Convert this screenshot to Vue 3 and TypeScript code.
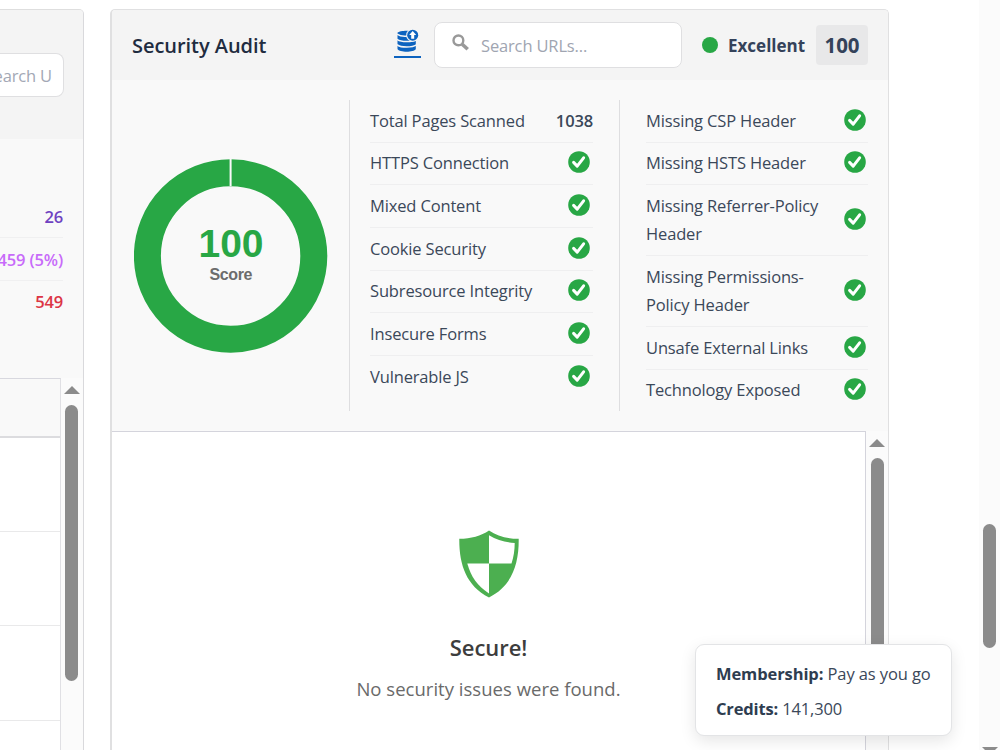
<script setup lang="ts">
interface Check {
  label: string
  value?: string
}

const connectionChecks: Check[] = [
  { label: 'Total Pages Scanned', value: '1038' },
  { label: 'HTTPS Connection' },
  { label: 'Mixed Content' },
  { label: 'Cookie Security' },
  { label: 'Subresource Integrity' },
  { label: 'Insecure Forms' },
  { label: 'Vulnerable JS' },
]

const headerChecks: Check[] = [
  { label: 'Missing CSP Header' },
  { label: 'Missing HSTS Header' },
  { label: 'Missing Referrer-Policy Header' },
  { label: 'Missing Permissions-Policy Header' },
  { label: 'Unsafe External Links' },
  { label: 'Technology Exposed' },
]

const checkColumns: Check[][] = [connectionChecks, headerChecks]
</script>

<template>
  <div class="page">
    <section class="side-panel">
      <div class="side-head">
        <div class="side-search"><span>Search U</span></div>
      </div>
      <div class="side-stats">
        <div class="stat indigo">26</div>
        <div class="stat violet">459 (5%)</div>
        <div class="stat red">549</div>
      </div>
      <div class="side-results">
        <div class="side-table">
          <div class="table-head"></div>
          <div v-for="n in 4" :key="n" class="table-row"></div>
        </div>
        <div class="scroll-track">
          <svg class="arrow" width="16" height="8" viewBox="0 0 16 8"><path d="M0 8 8 0l8 8z" /></svg>
          <div class="thumb side-thumb"></div>
        </div>
      </div>
    </section>

    <section class="audit">
      <header class="audit-head">
        <h2>Security Audit</h2>
        <a class="export">
          <svg width="22" height="24" viewBox="0 0 22 24">
            <path class="ink" d="M.5 3.7C2.6 1.5 14 .7 18.8 3.6V20c-2 3.6-16.3 3.6-18.3 0z" />
            <path class="gap" d="M0 5.2c3 2.1 7 2.3 11 1.8M0 10.3c4 3 15 3 20 0M0 15.7c4 3.2 15 3.2 20 0" />
            <circle class="cut" cx="15.7" cy="6.2" r="6.5" />
            <circle class="ink" cx="15.7" cy="6.2" r="5.5" />
            <path class="up" d="m15.7 2.1 3.5 3.9h-2v3.8h-3V6h-2z" />
          </svg>
        </a>
        <div class="search">
          <svg width="18" height="18" viewBox="0 0 18 18">
            <circle cx="6.4" cy="6.4" r="4.9" />
            <path d="m10.2 10.2 5.5 5.1" />
          </svg>
          <span>Search URLs...</span>
        </div>
        <div class="rating">
          <i class="dot"></i>
          <span class="grade">Excellent</span>
          <strong class="badge">100</strong>
        </div>
      </header>

      <div class="summary">
        <div class="score">
          <svg width="194" height="194" viewBox="0 0 194 194">
            <circle class="ring" cx="96.6" cy="97" r="83.2" />
            <path class="notch" d="M96.6 0v27" />
            <text class="score-value" x="97" y="97.5" textLength="65">100</text>
            <text class="score-label" x="97" y="121" textLength="43">Score</text>
          </svg>
        </div>
        <div v-for="(column, c) in checkColumns" :key="c" class="checks">
          <div v-for="item in column" :key="item.label" class="check">
            <span>{{ item.label }}</span>
            <strong v-if="item.value">{{ item.value }}</strong>
            <svg v-else width="22" height="22" viewBox="0 0 22 22">
              <circle cx="11" cy="11" r="10.8" />
              <path d="m5.6 11.4 3.6 3.7 6.4-8.3" />
            </svg>
          </div>
        </div>
      </div>

      <div class="results">
        <div class="empty">
          <svg class="shield" width="60" height="68" viewBox="0 0 60 68">
            <path class="shield-body" d="M30 .5C22 6 12 8.8.3 8.8 0 34 7 56 30 67.5 53 56 60 34 59.7 8.8 48 8.8 38 6 30 .5z" />
            <path class="shield-clear" d="M30 5.3C38 10.2 46 12.2 55.7 13c0 7.3-1 14-3.2 20.6H30z" />
            <path class="shield-clear" d="M30 33.6v29.8C18.5 56.5 12 47 8.3 33.6z" />
          </svg>
          <h3>Secure!</h3>
          <p>No security issues were found.</p>
        </div>
        <div class="scroll-track">
          <svg class="arrow" width="16" height="8" viewBox="0 0 16 8"><path d="M0 8 8 0l8 8z" /></svg>
          <div class="thumb"></div>
        </div>
      </div>
    </section>

    <div class="page-scroll">
      <div class="page-thumb"></div>
      <svg class="arrow" width="16" height="8" viewBox="0 0 16 8"><path d="M0 0h16L8 8z" /></svg>
    </div>

    <aside class="account">
      <div class="membership"><b>Membership:</b> Pay as you go</div>
      <div class="credits"><b>Credits:</b> 141,300</div>
    </aside>
  </div>
</template>

<style>
body {
  margin: 0;
  overflow: hidden;
  background: #fff;
}
</style>

<style scoped>
* {
  box-sizing: border-box;
}
.page {
  position: relative;
  display: flex;
  width: 1000px;
  height: 750px;
  overflow: hidden;
  background: #fff;
  color: #3b4859;
  font-family: 'Open Sans', 'Noto Sans', sans-serif;
  font-size: 16.5px;
  letter-spacing: -0.15px;
}
svg {
  display: block;
  flex: none;
}
.side-panel {
  display: flex;
  flex-direction: column;
  width: 84px;
  height: 741px;
  margin-top: 9px;
  border-top: 1px solid #dedede;
  border-right: 1px solid #d9d9dc;
  border-radius: 0 5px 0 0;
  overflow: hidden;
  background: #f9f9f9;
}
.side-head {
  display: flex;
  height: 129px;
  padding-top: 43px;
  background: #f4f4f4;
}
.side-search {
  display: flex;
  align-items: center;
  justify-content: flex-end;
  width: 64px;
  height: 44px;
  padding-right: 11px;
  border: 1px solid #dfdfe1;
  border-left: 0;
  border-radius: 0 8px 8px 0;
  overflow: hidden;
  background: #fff;
  color: #a3a8b5;
  white-space: nowrap;
}
.side-stats {
  height: 239px;
  padding: 57px 20px 0 0;
}
.stat {
  display: flex;
  align-items: center;
  justify-content: flex-end;
  height: 42.4px;
  border-bottom: 1px solid #f0f0f1;
  font-weight: 600;
  white-space: nowrap;
}
.stat:last-child {
  border-bottom: 0;
}
.indigo {
  color: #6f42c1;
}
.violet {
  color: #c86bfa;
}
.red {
  color: #dc3545;
}
.side-results,
.results {
  display: flex;
  flex: 1;
  min-height: 0;
}
.side-table {
  width: 61px;
  border-top: 1px solid #d8d8df;
  border-right: 1px solid #e0e0e4;
  background: #fff;
}
.table-head {
  height: 59px;
  border-bottom: 2px solid #dcdcdf;
  background: #f9f9f9;
}
.table-row {
  height: 94.2px;
  border-bottom: 1px solid #e9e9ea;
}
.scroll-track {
  display: flex;
  flex: 1;
  flex-direction: column;
  align-items: center;
  gap: 11px;
  padding-top: 8px;
  background: #fbfbfb;
}
.arrow {
  fill: #8b8b8b;
}
.thumb {
  width: 13px;
  height: 250px;
  border-radius: 7px;
  background: #8b8b8b;
}
.side-thumb {
  height: 276px;
}
.side-results .scroll-track {
  padding-right: 1px;
}
.audit {
  display: flex;
  flex-direction: column;
  width: 779px;
  height: 741px;
  margin: 9px 0 0 26px;
  border: 1px solid #e0e0e1;
  border-left-width: 2px;
  border-bottom: 0;
  border-radius: 5px 5px 0 0;
  overflow: hidden;
  background: #f9f9f9;
}
.audit-head {
  display: flex;
  align-items: center;
  height: 70px;
  padding: 0 20px;
  background: #f4f4f4;
}
h2 {
  width: 262px;
  margin: 0;
  padding-top: 2px;
  color: #1f2c40;
  font-size: 20px;
  font-weight: 600;
  letter-spacing: -0.05px;
  line-height: 28px;
}
.export {
  display: flex;
  justify-content: center;
  width: 27px;
  height: 29px;
  margin-top: -4px;
  border-bottom: 2px solid #0d63bf;
}
.export .ink {
  fill: #0d63bf;
}
.export .gap {
  fill: none;
  stroke: #f4f4f4;
  stroke-width: 1.5;
}
.export .cut {
  fill: #f4f4f4;
}
.export .up {
  fill: #fff;
}
.search {
  display: flex;
  align-items: center;
  gap: 11px;
  width: 248px;
  height: 46px;
  margin-left: 13px;
  padding-left: 17px;
  border: 1px solid #dfdfe1;
  border-radius: 8px;
  background: #fff;
  color: #a0a5b1;
}
.search svg {
  margin-top: -5px;
  fill: none;
  stroke: #999;
  stroke-width: 2.4;
}
.search span {
  padding-top: 1px;
}
.search path {
  stroke-width: 3.6;
}
.rating {
  display: flex;
  align-items: center;
  margin-left: auto;
}
.dot {
  width: 16px;
  height: 16px;
  border-radius: 50%;
  background: #28a745;
}
.grade {
  width: 88px;
  margin-left: 10.5px;
  color: #34425a;
  font-size: 17px;
  font-weight: 700;
  letter-spacing: 0;
}
.badge {
  width: 52px;
  height: 40px;
  border-radius: 4px;
  background: #e8e8e9;
  color: #34425a;
  font-size: 20.5px;
  font-weight: 700;
  letter-spacing: 0;
  line-height: 40px;
  text-align: center;
}
.summary {
  display: flex;
  height: 351px;
  padding: 20px 20px 20px 22px;
}
.score {
  display: flex;
  align-items: center;
  width: 215px;
}
.ring {
  fill: none;
  stroke: #28a745;
  stroke-width: 27;
}
.notch {
  stroke: #f9f9f9;
  stroke-width: 2;
}
.score-value,
.score-label {
  font-family: 'Liberation Sans', Arial, sans-serif;
  font-weight: 700;
  letter-spacing: 0;
  text-anchor: middle;
}
.score-value {
  fill: #28a745;
  font-size: 39px;
}
.score-label {
  fill: #6c6c6c;
  font-size: 16px;
}
.checks {
  width: 270px;
  border-left: 1px solid #dedee0;
  padding: 0 26px 0 20px;
}
.checks:last-child {
  flex: 1;
  padding: 0 0 0 26px;
}
.check {
  display: flex;
  align-items: center;
  justify-content: space-between;
  padding: 6.75px 0;
  border-bottom: 1px solid #efeff0;
  line-height: 28.15px;
}
.check:last-child {
  border-bottom: 0;
}
.check span {
  max-width: 185px;
}
.check strong {
  font-weight: 600;
}
.check svg {
  margin: -2px 3px 0 0;
}
.checks:last-child .check svg {
  margin-right: 2px;
}
.check circle {
  fill: #28a745;
}
.check path {
  fill: none;
  stroke: #fff;
  stroke-width: 3;
  stroke-linecap: round;
  stroke-linejoin: round;
}
.empty {
  display: flex;
  flex-direction: column;
  align-items: center;
  width: 754px;
  padding-top: 98px;
  border: 1px solid #d4d4dc;
  border-left: 0;
  border-bottom: 0;
  background: #fff;
}
.shield-body {
  fill: #4caf50;
}
.shield-clear {
  fill: #fff;
}
h3 {
  margin: 32px 0 0;
  color: #3d3d3d;
  font-size: 22px;
  font-weight: 600;
  letter-spacing: -0.05px;
  line-height: 34px;
}
p {
  margin: 10px 0 0;
  color: #6a6a6a;
  font-size: 18.5px;
  letter-spacing: 0.02px;
  line-height: 30px;
}
.page-scroll {
  display: flex;
  flex-direction: column;
  align-items: center;
  width: 21px;
  margin-left: auto;
  padding-top: 524px;
  background: #fbfbfb;
}
.page-thumb {
  width: 13px;
  height: 124px;
  margin-bottom: 99px;
  border-radius: 7px;
  background: #8b8b8b;
}
.page-thumb,
.page-scroll .arrow {
  flex: none;
}
.account {
  position: absolute;
  top: 644px;
  left: 695px;
  width: 257px;
  height: 92px;
  padding: 11px 20px;
  border: 1px solid #e3e4e6;
  border-radius: 9px;
  background: #fff;
  box-shadow: 0 5px 16px rgba(0, 0, 0, 0.1);
  line-height: 35px;
  white-space: nowrap;
}
.account b {
  color: #2e3d50;
  font-weight: 700;
}
.membership {
  letter-spacing: -0.1px;
}
</style>
